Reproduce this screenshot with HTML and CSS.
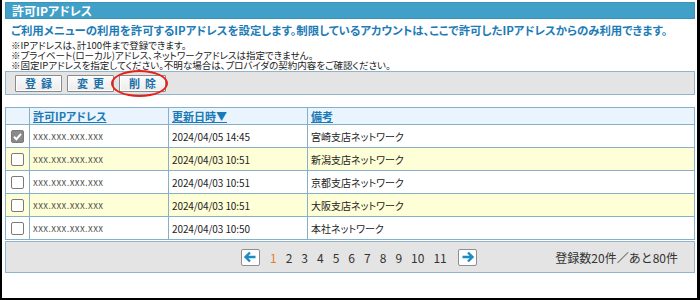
FILE: index.html
```html
<!DOCTYPE html>
<html lang="ja">
<head>
<meta charset="utf-8">
<link rel="stylesheet" href="styles.css">
</head>
<body>
<div class="frame">
  <div class="title">許可IPアドレス</div>
  <p class="lead">ご利用メニューの利用を許可するIPアドレスを設定します。制限しているアカウントは、ここで許可したIPアドレスからのみ利用できます。</p>
  <div class="notes">
    <div>※IPアドレスは、計100件まで登録できます。</div>
    <div>※プライベート(ローカル)アドレス、ネットワークアドレスは指定できません。</div>
    <div>※固定IPアドレスを指定してください。不明な場合は、プロバイダの契約内容をご確認ください。</div>
  </div>
  <div class="toolbar">
    <button class="btn">登録</button>
    <button class="btn">変更</button>
    <button class="btn">削除</button>
    <span class="mark"></span>
  </div>
  <table class="list">
    <colgroup><col class="c-chk"><col class="c-ip"><col class="c-date"><col></colgroup>
    <thead>
      <tr><th></th><th><a href="#">許可IPアドレス</a></th><th><a href="#">更新日時▼</a></th><th><a href="#">備考</a></th></tr>
    </thead>
    <tbody>
      <tr><td><span class="cb on"><svg viewBox="0 0 13 13" width="13" height="13"><path d="M3 6.8l2.4 2.4L10 3.8" fill="none" stroke="#fff" stroke-width="2"/></svg></span></td><td class="ip">xxx.xxx.xxx.xxx</td><td class="dt">2024/04/05 14:45</td><td class="rm">宮崎支店ネットワーク</td></tr>
      <tr class="alt"><td><span class="cb"></span></td><td class="ip">xxx.xxx.xxx.xxx</td><td class="dt">2024/04/03 10:51</td><td class="rm">新潟支店ネットワーク</td></tr>
      <tr><td><span class="cb"></span></td><td class="ip">xxx.xxx.xxx.xxx</td><td class="dt">2024/04/03 10:51</td><td class="rm">京都支店ネットワーク</td></tr>
      <tr class="alt"><td><span class="cb"></span></td><td class="ip">xxx.xxx.xxx.xxx</td><td class="dt">2024/04/03 10:51</td><td class="rm">大阪支店ネットワーク</td></tr>
      <tr><td><span class="cb"></span></td><td class="ip">xxx.xxx.xxx.xxx</td><td class="dt">2024/04/03 10:50</td><td class="rm">本社ネットワーク</td></tr>
    </tbody>
  </table>
  <div class="pager">
    <span class="arrow"><svg viewBox="0 0 17 14" width="17" height="14"><path d="M13.5 7H4M8 2.5L3.5 7 8 11.5" fill="none" stroke="#1b8cc4" stroke-width="2.4"/></svg></span>
    <span class="pages">
      <span class="cur">1</span><span>2</span><span>3</span><span>4</span><span>5</span><span>6</span><span>7</span><span>8</span><span>9</span><span>10</span><span>11</span>
    </span>
    <span class="arrow"><svg viewBox="0 0 17 14" width="17" height="14"><path d="M3.5 7H13M9 2.5L13.5 7 9 11.5" fill="none" stroke="#1b8cc4" stroke-width="2.4"/></svg></span>
    <span class="count">登録数20件／あと80件</span>
  </div>
</div>
</body>
</html>
```
FILE: styles.css
```css
* { box-sizing: border-box; }
body {
  margin: 0;
  font-family: "Noto Sans CJK JP", "Noto Sans", sans-serif;
  color: #333;
  background: #fff;
}
.frame {
  width: 700px;
  height: 300px;
  border-left: 2px solid #000;
  border-right: 3px solid #000;
  border-bottom: 2px solid #000;
  padding: 2px 2px 0 3px;
}
.title {
  height: 17px;
  background: #41a0c7;
  border: 1px solid #3a94ba;
  color: #fff;
  font-weight: bold;
  font-size: 12px;
  line-height: 15px;
  padding-left: 6px;
  font-feature-settings: "palt";
}
.lead {
  margin: 4px 0 0 6px;
  color: #1d7bb6;
  font-weight: bold;
  font-size: 11.4px;
  line-height: 14px;
  font-feature-settings: "palt";
  white-space: nowrap;
}
.notes {
  margin: 3px 0 0 6px;
  font-size: 9.5px;
  line-height: 10px;
  color: #222;
  font-feature-settings: "palt";
  white-space: nowrap;
}
.toolbar {
  position: relative;
  margin-top: 1px;
  height: 24px;
  background: #e4e4e4;
  border: 1px solid #8fb4cb;
  display: flex;
  gap: 5px;
  padding: 3px 0 0 9px;
}
.btn {
  width: 47px;
  height: 17px;
  padding: 0;
  background: linear-gradient(#fbfbfb, #ececec);
  border: 1px solid #8a8a8a;
  box-shadow: inset 0 0 0 1px #fff;
  border-radius: 1px;
  color: #1a6ea8;
  font-family: inherit;
  font-weight: bold;
  font-size: 11px;
  line-height: 15px;
  letter-spacing: 5px;
  text-indent: 5px;
}
.mark {
  position: absolute;
  left: 105px;
  top: -2px;
  width: 57px;
  height: 27px;
  border: 2px solid #e8201c;
  border-radius: 50%;
}
.list {
  margin-top: 12px;
  width: 690px;
  border-collapse: collapse;
  table-layout: fixed;
  border: 1px solid #86afc8;
}
.c-chk { width: 24px; }
.c-ip { width: 139px; }
.c-date { width: 139px; }
.list th, .list td {
  border: 1px solid #86afc8;
  padding: 0 0 0 3px;
  text-align: left;
  white-space: nowrap;
}
.list th {
  height: 17px;
  background: #eaf4fc;
  font-size: 11px;
  line-height: 14px;
  font-feature-settings: "palt";
}
.list th a {
  color: #1a7ab8;
  font-weight: bold;
}
.list td {
  height: 23px;
  background: #fff;
}
.list tr.alt td { background: #fefed7; }
.list td:first-child { padding: 0 0 0 5px; }
.cb {
  display: block;
  width: 13px;
  height: 13px;
  border: 1px solid #7a7a7a;
  border-radius: 2px;
  background: #fff;
}
.cb.on {
  background: #8a8a8a;
  border-color: #7a7a7a;
}
.cb.on svg { display: block; margin: -1px; }
.ip {
  font-size: 9.5px;
  color: #555;
  letter-spacing: 0.4px;
}
.dt {
  font-size: 10px;
  color: #222;
  letter-spacing: -0.1px;
}
.rm {
  font-size: 10px;
  color: #222;
  font-feature-settings: "palt";
}
.pager {
  margin-top: 1px;
  height: 32px;
  background: #e4e4e4;
  border: 1px solid #8fb4cb;
  display: flex;
  align-items: center;
  padding: 0 16px 0 235px;
}
.arrow {
  width: 19px;
  height: 17px;
  background: #fff;
  border: 1px solid #8e8e8e;
  border-radius: 2px;
  display: flex;
  align-items: center;
  justify-content: center;
}
.pages {
  display: flex;
  gap: 9px;
  margin: 0 11px 0 10px;
  font-size: 12px;
  color: #333;
}
.pages .cur { color: #ea7a2a; }
.count {
  margin-left: auto;
  font-size: 12px;
  color: #333;
}
```
